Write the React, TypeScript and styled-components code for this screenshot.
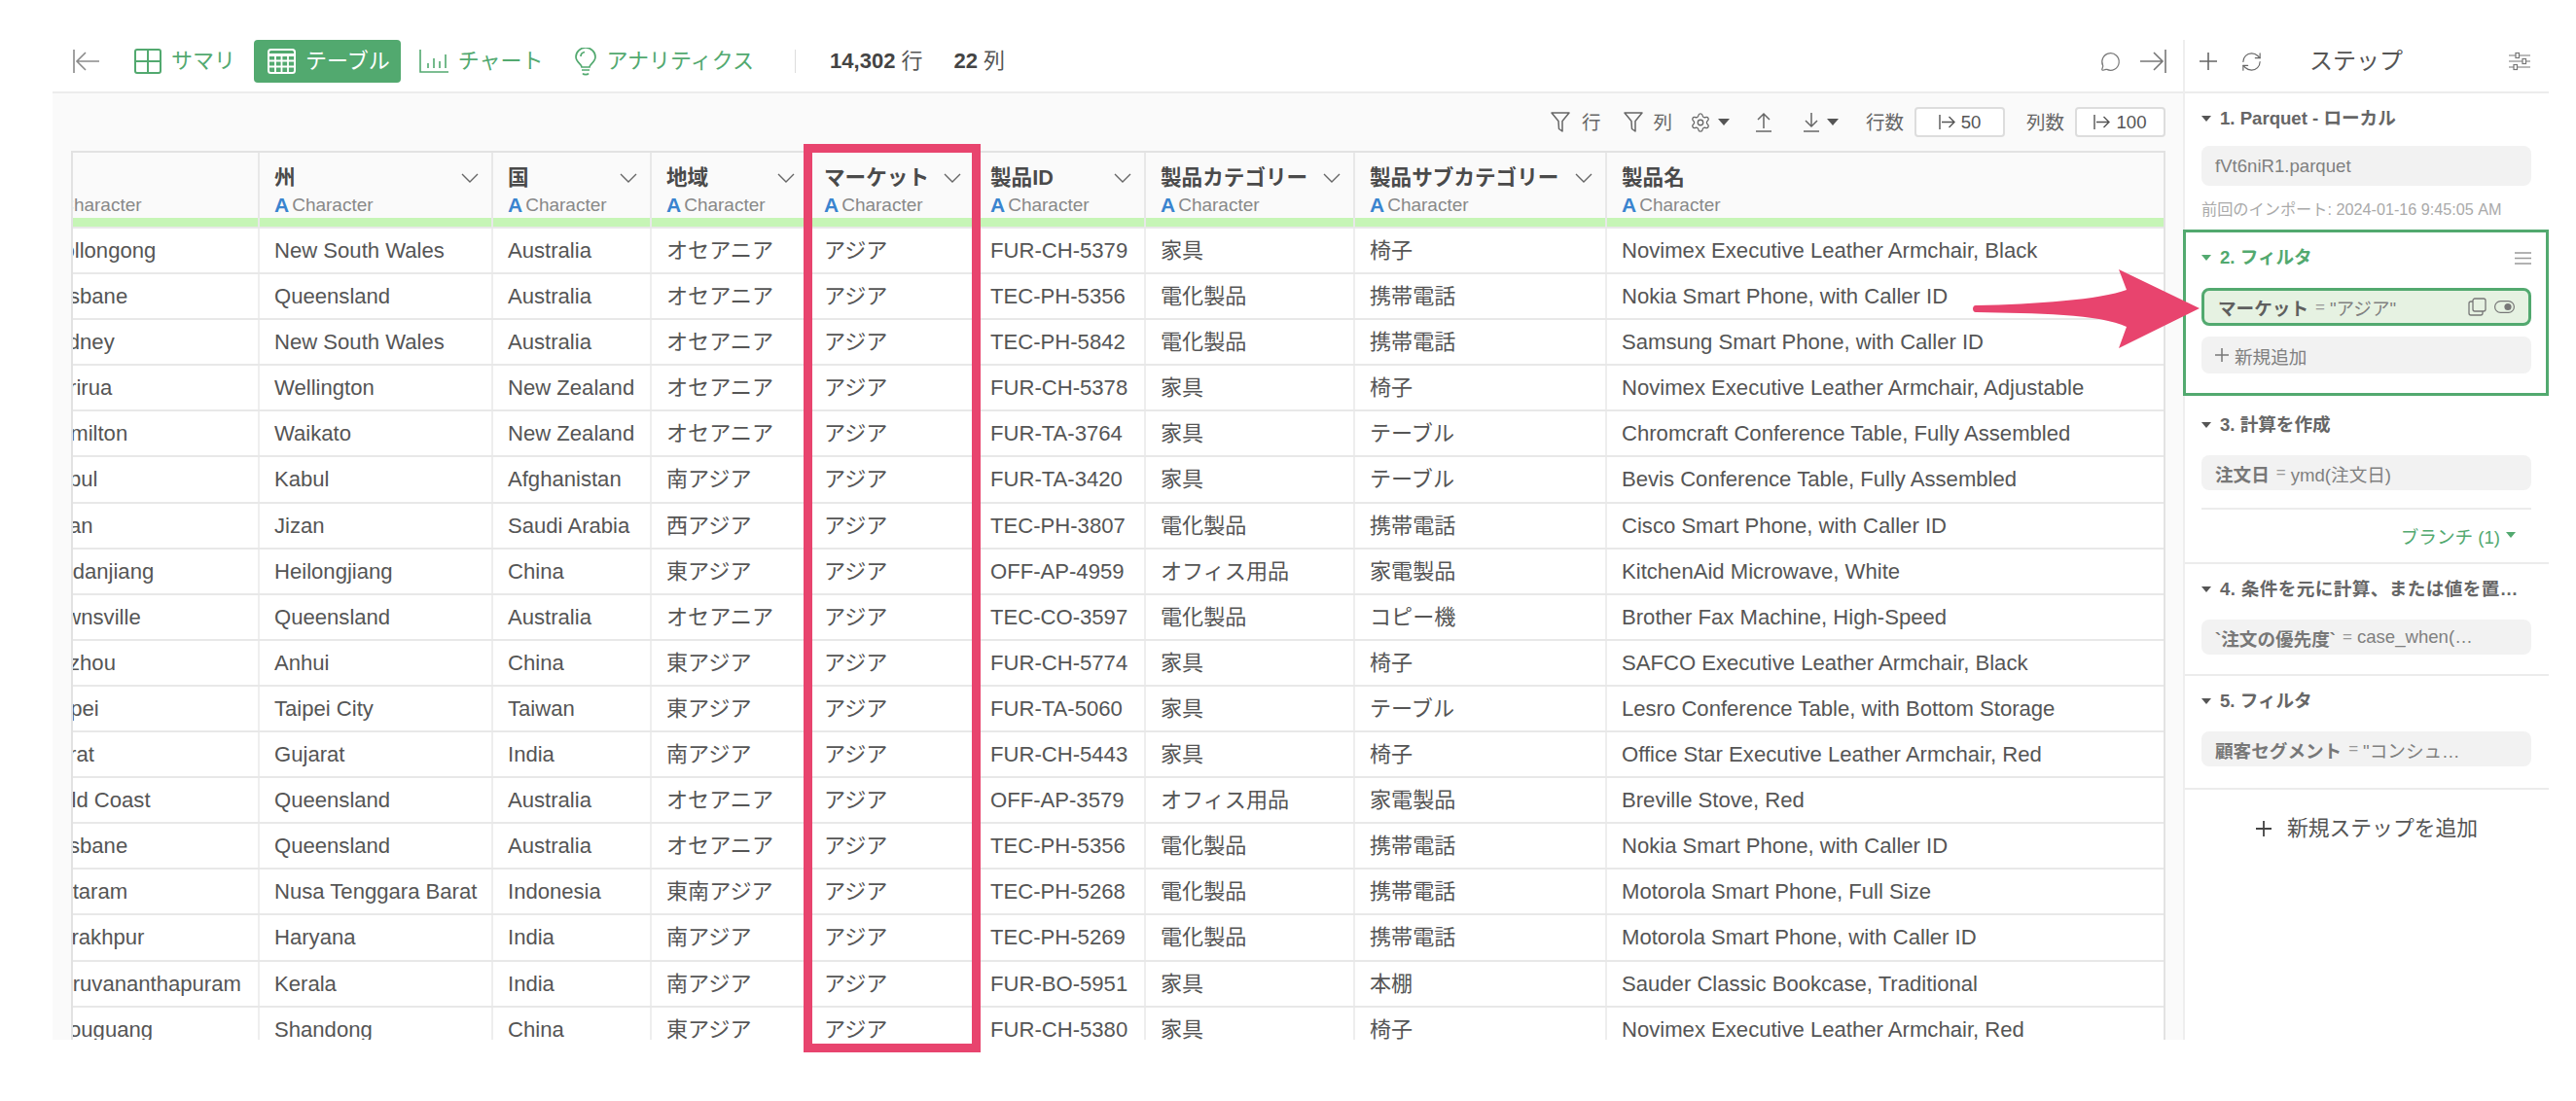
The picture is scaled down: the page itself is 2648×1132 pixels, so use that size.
import styled, { createGlobalStyle } from "styled-components";
import { MessageCircle, RefreshCw, Settings } from "lucide-react";

const SANS = `"Liberation Sans", "Noto Sans CJK JP", sans-serif`;
const GREEN = "#52a96f";
const PINK = "#e8446e";

const GlobalStyle = createGlobalStyle`
  html, body { margin: 0; padding: 0; background: #fff; }
  body { font-family: ${SANS}; color: #555; }
  * { box-sizing: border-box; }
`;

const Page = styled.div`
  position: relative;
  display: flex;
  width: 2648px;
  height: 1132px;
  padding: 41px 28px 0 54px;
  overflow: hidden;
`;

const Main = styled.div`
  display: flex;
  flex-direction: column;
  width: 2190px;
  height: 1028px;
`;

const TopBar = styled.div`
  display: flex;
  align-items: center;
  flex: 0 0 55px;
  height: 55px;
  padding: 0 17px 9px 21px;
  border-bottom: 2px solid #ececec;
`;

const Collapse = styled.svg`
  width: 27px;
  height: 24px;
  margin-right: 22px;
  color: #8a8a8a;
`;

const Tab = styled.div<{ $active?: boolean; $gap?: number }>`
  display: flex;
  align-items: center;
  height: 44px;
  margin-right: ${(p) => p.$gap ?? 6}px;
  padding: 0 11px 0 14px;
  gap: 10px;
  border-radius: 4px;
  font-size: 22px;
  line-height: 30px;
  color: ${(p) => (p.$active ? "#fff" : GREEN)};
  background: ${(p) => (p.$active ? GREEN : "transparent")};
`;

const Separator = styled.div`
  width: 1px;
  height: 24px;
  margin: 0 35px 0 31px;
  background: #ddd;
`;

const Stat = styled.div`
  margin-right: 32px;
  font-size: 22px;
  line-height: 30px;
  color: #555;
  b { color: #444; margin-right: 6px; }
`;

const TopRight = styled.div`
  display: flex;
  align-items: center;
  gap: 20px;
  margin-left: auto;
  color: #777;
`;

const ViewArea = styled.div`
  display: flex;
  flex-direction: column;
  flex: 1;
  min-height: 0;
  padding: 0 18px 0 19px;
  background: #fafafa;
`;

const SubBar = styled.div`
  display: flex;
  align-items: center;
  justify-content: flex-end;
  flex: 0 0 59px;
  font-size: 19.5px;
  line-height: 28px;
  color: #666;
`;

const ToolItem = styled.div<{ $left?: number; $gap?: number }>`
  display: flex;
  align-items: center;
  margin-left: ${(p) => p.$left ?? 0}px;
  gap: ${(p) => p.$gap ?? 0}px;
`;

const Caret = styled.span<{ $color?: string; $size?: number }>`
  display: inline-block;
  flex: none;
  width: 0;
  height: 0;
  border-left: ${(p) => p.$size ?? 6}px solid transparent;
  border-right: ${(p) => p.$size ?? 6}px solid transparent;
  border-top: ${(p) => (p.$size ?? 6) + 1}px solid ${(p) => p.$color ?? "#555"};
`;

const CountBox = styled.div`
  display: flex;
  align-items: center;
  justify-content: center;
  gap: 6px;
  width: 93px;
  height: 31px;
  border: 2px solid #ddd;
  border-radius: 4px;
  background: #fff;
  font-size: 18.6px;
  color: #555;
`;

const TableWrap = styled.div`
  flex: 1;
  min-height: 0;
  overflow: hidden;
  border: 2px solid #e2e2e2;
  border-bottom: 0;
  background: #fff;
`;

const Scroller = styled.div`
  width: calc(100% + 46px);
  margin-left: -46px;
`;

const COLUMNS = "236px 240px 163px 162px 171px 175px 215px 259px 1fr";

const HeadRow = styled.div`
  display: grid;
  grid-template-columns: ${COLUMNS};
  background: #fafafa;
`;

const HeadCell = styled.div`
  display: flex;
  flex-direction: column;
  height: 78px;
  border-left: 2px solid #e8e8e8;
  border-bottom: 2px solid #e8e8e8;
  &:first-child { border-left: 0; }
`;

const HeadBody = styled.div`
  flex: 1;
  padding: 11px 13px 0 15px;
`;

const HeadTitle = styled.div`
  display: flex;
  align-items: center;
  justify-content: space-between;
  height: 30px;
  font-size: 21.6px;
  font-weight: 700;
  line-height: 30px;
  color: #4a4a4a;
  white-space: nowrap;
  svg { flex: none; color: #666; }
`;

const HeadType = styled.div`
  display: flex;
  align-items: center;
  gap: 3px;
  height: 22px;
  margin-top: 2px;
  font-size: 19px;
  line-height: 22px;
  color: #888;
  b { font-size: 21px; color: #3a84cf; }
`;

const Strip = styled.div`
  flex: 0 0 9px;
  background: #c6f5b6;
`;

const Row = styled.div`
  display: grid;
  grid-template-columns: ${COLUMNS};
  height: 47.1px;
  border-bottom: 2px solid #e8e8e8;
`;

const Cell = styled.div`
  padding-left: 15px;
  border-left: 2px solid #eee;
  font-size: 22.1px;
  line-height: 45px;
  color: #555;
  white-space: nowrap;
  &:first-child { border-left: 0; }
`;

const Panel = styled.aside`
  display: flex;
  flex-direction: column;
  flex: 0 0 376px;
  height: 1028px;
  border-left: 2px solid #eee;
`;

const PanelHead = styled.div`
  display: flex;
  align-items: center;
  flex: 0 0 55px;
  padding: 0 19px 9px 14px;
  border-bottom: 2px solid #ececec;
  color: #666;
`;

const PanelTitle = styled.div`
  margin-left: 48px;
  font-size: 24px;
  line-height: 30px;
  color: #555;
`;

const SpinIcon = styled(RefreshCw)`
  margin-left: 23px;
`;

const PanelSettings = styled.div`
  display: flex;
  margin-left: auto;
`;

const Section = styled.section<{ $top: number; $bottom: number; $selected?: boolean; $line?: boolean }>`
  padding: ${(p) => p.$top}px 18px ${(p) => p.$bottom}px 17px;
  border-bottom: ${(p) => (p.$line ? "2px solid #ececec" : "0")};
  ${(p) =>
    p.$selected &&
    `
    margin-left: -2px;
    padding-left: 16px;
    padding-right: 15px;
    border: 3px solid ${GREEN};
  `}
`;

const StepTitle = styled.div<{ $green?: boolean; $spread?: boolean }>`
  display: flex;
  align-items: center;
  gap: 9px;
  height: 28px;
  font-size: 18.6px;
  font-weight: 700;
  line-height: 28px;
  white-space: nowrap;
  letter-spacing: ${(p) => (p.$spread ? "0.4px" : "0")};
  color: ${(p) => (p.$green ? GREEN : "#666")};
`;

const TitleMenu = styled.svg`
  width: 17px;
  height: 13px;
  margin-left: auto;
  color: #999;
`;

const Chip = styled.div<{ $top: number; $height: number; $selected?: boolean }>`
  display: flex;
  align-items: center;
  height: ${(p) => p.$height}px;
  margin-top: ${(p) => p.$top}px;
  padding: 0 14px;
  border-radius: 8px;
  font-size: 18.6px;
  color: #808080;
  white-space: nowrap;
  background: ${(p) => (p.$selected ? "#e6f2e2" : "#f2f2f2")};
  border: ${(p) => (p.$selected ? `3px solid ${GREEN}` : "0")};
  b { color: ${(p) => (p.$selected ? "#5f5f5f" : "#777")}; margin-right: 7px; }
  small { font-size: 17px; color: #999; margin-right: 5px; }
`;

const ChipIcons = styled.div`
  display: flex;
  align-items: center;
  gap: 8px;
  margin-left: auto;
  color: #777;
`;

const AddLine = styled.div`
  display: flex;
  align-items: center;
  gap: 6px;
  svg { flex: none; }
`;

const Stamp = styled.div`
  margin-top: 12px;
  font-size: 16.2px;
  line-height: 24px;
  color: #aaa;
  white-space: nowrap;
`;

const Divider = styled.div`
  height: 2px;
  margin-top: 18px;
  background: #ececec;
`;

const Branch = styled.div`
  display: flex;
  align-items: center;
  justify-content: flex-end;
  gap: 6px;
  height: 26px;
  margin-top: 13px;
  padding-right: 16px;
  font-size: 18.6px;
  color: ${GREEN};
`;

const AddStep = styled.div`
  display: flex;
  align-items: center;
  justify-content: center;
  gap: 16px;
  height: 28px;
  margin-top: 26px;
  font-size: 21.8px;
  line-height: 28px;
  color: #555;
`;

const MarketFrame = styled.div`
  position: absolute;
  left: 826px;
  top: 148px;
  width: 182px;
  height: 934px;
  border: 9px solid ${PINK};
  pointer-events: none;
`;

const ArrowMark = styled.svg`
  position: absolute;
  left: 2020px;
  top: 270px;
  width: 250px;
  height: 95px;
  pointer-events: none;
`;

const headers = [
  { title: "" },
  { title: "州" },
  { title: "国" },
  { title: "地域" },
  { title: "マーケット" },
  { title: "製品ID" },
  { title: "製品カテゴリー" },
  { title: "製品サブカテゴリー" },
  { title: "製品名", noMenu: true },
];

const rows = [
  ["Wollongong", "New South Wales", "Australia", "オセアニア", "アジア", "FUR-CH-5379", "家具", "椅子", "Novimex Executive Leather Armchair, Black"],
  ["Brisbane", "Queensland", "Australia", "オセアニア", "アジア", "TEC-PH-5356", "電化製品", "携帯電話", "Nokia Smart Phone, with Caller ID"],
  ["Sydney", "New South Wales", "Australia", "オセアニア", "アジア", "TEC-PH-5842", "電化製品", "携帯電話", "Samsung Smart Phone, with Caller ID"],
  ["Porirua", "Wellington", "New Zealand", "オセアニア", "アジア", "FUR-CH-5378", "家具", "椅子", "Novimex Executive Leather Armchair, Adjustable"],
  ["Hamilton", "Waikato", "New Zealand", "オセアニア", "アジア", "FUR-TA-3764", "家具", "テーブル", "Chromcraft Conference Table, Fully Assembled"],
  ["Kabul", "Kabul", "Afghanistan", "南アジア", "アジア", "FUR-TA-3420", "家具", "テーブル", "Bevis Conference Table, Fully Assembled"],
  ["Jizan", "Jizan", "Saudi Arabia", "西アジア", "アジア", "TEC-PH-3807", "電化製品", "携帯電話", "Cisco Smart Phone, with Caller ID"],
  ["Mudanjiang", "Heilongjiang", "China", "東アジア", "アジア", "OFF-AP-4959", "オフィス用品", "家電製品", "KitchenAid Microwave, White"],
  ["Townsville", "Queensland", "Australia", "オセアニア", "アジア", "TEC-CO-3597", "電化製品", "コピー機", "Brother Fax Machine, High-Speed"],
  ["Suzhou", "Anhui", "China", "東アジア", "アジア", "FUR-CH-5774", "家具", "椅子", "SAFCO Executive Leather Armchair, Black"],
  ["Taipei", "Taipei City", "Taiwan", "東アジア", "アジア", "FUR-TA-5060", "家具", "テーブル", "Lesro Conference Table, with Bottom Storage"],
  ["Surat", "Gujarat", "India", "南アジア", "アジア", "FUR-CH-5443", "家具", "椅子", "Office Star Executive Leather Armchair, Red"],
  ["Gold Coast", "Queensland", "Australia", "オセアニア", "アジア", "OFF-AP-3579", "オフィス用品", "家電製品", "Breville Stove, Red"],
  ["Brisbane", "Queensland", "Australia", "オセアニア", "アジア", "TEC-PH-5356", "電化製品", "携帯電話", "Nokia Smart Phone, with Caller ID"],
  ["Mataram", "Nusa Tenggara Barat", "Indonesia", "東南アジア", "アジア", "TEC-PH-5268", "電化製品", "携帯電話", "Motorola Smart Phone, Full Size"],
  ["Gorakhpur", "Haryana", "India", "南アジア", "アジア", "TEC-PH-5269", "電化製品", "携帯電話", "Motorola Smart Phone, with Caller ID"],
  ["Thiruvananthapuram", "Kerala", "India", "南アジア", "アジア", "FUR-BO-5951", "家具", "本棚", "Sauder Classic Bookcase, Traditional"],
  ["Shouguang", "Shandong", "China", "東アジア", "アジア", "FUR-CH-5380", "家具", "椅子", "Novimex Executive Leather Armchair, Red"],
];

function SummaryIcon() {
  return (
    <svg width="28" height="26" viewBox="0 0 28 26" fill="none" stroke="currentColor" strokeWidth="2">
      <rect x="1" y="1" width="26" height="24" rx="2" />
      <path d="M14 1v24M1 13h26" />
    </svg>
  );
}

function TableIcon() {
  return (
    <svg width="29" height="26" viewBox="0 0 29 26" fill="none" stroke="#fff">
      <rect x="1" y="1" width="27" height="24" rx="2.500" strokeWidth="2" />
      <path d="M1 6.500h27" strokeWidth="3" />
      <path d="M1 12.500h27M1 18.500h27M8 6.500V25M14.500 6.500V25M21 6.500V25" strokeWidth="1.800" />
    </svg>
  );
}

function ChartIcon() {
  return (
    <svg width="30" height="26" viewBox="0 0 30 26" fill="none" stroke="currentColor" strokeWidth="1.6">
      <path d="M1 1v23h29" />
      <path d="M9 15v5M15 10v10M21 13v7M27 6v14" />
    </svg>
  );
}

function BulbIcon() {
  return (
    <svg width="22" height="29" viewBox="0 0 22 29" fill="none" stroke="currentColor" strokeWidth="1.7">
      <path d="M7 20c0-3-6-5-6-10.500A10 9.500 0 0 1 21 9.500C21 15 15 17 15 20z" />
      <path d="M7 23h8M8 26.500c1 1.500 5 1.500 6 0" />
      <path d="M6 9c0-2 1.500-4 4-4.500" />
    </svg>
  );
}

function FunnelIcon() {
  return (
    <svg width="20" height="21" viewBox="0 0 20 21" fill="none" stroke="#666" strokeWidth="1.5" strokeLinejoin="round">
      <path d="M1 1h18l-7 8.500V20l-3.500-2.500-.5-8z" />
    </svg>
  );
}

function UpIcon({ down }: { down?: boolean }) {
  return (
    <svg width="16" height="21" viewBox="0 0 16 21" fill="none" stroke="#666" strokeWidth="1.5">
      {down ? <path d="M8 1v14M2 9l6 6 6-6" /> : <path d="M8 17V2M2 8l6-6 6 6" />}
      <path d="M0 20h16" />
    </svg>
  );
}

function LimitIcon() {
  return (
    <svg width="17" height="17" viewBox="0 0 17 17" fill="none" stroke="#555" strokeWidth="1.4">
      <path d="M1 1v15M3 8.500h13M10.500 3l5.500 5.500-5.500 5.500" />
    </svg>
  );
}

function Chevron() {
  return (
    <svg width="18" height="10" viewBox="0 0 18 10" fill="none" stroke="currentColor" strokeWidth="1.4">
      <path d="M1 1l8 8 8-8" />
    </svg>
  );
}

function SlidersIcon() {
  return (
    <svg width="22" height="20" viewBox="0 0 22 20" fill="none" stroke="#777" strokeWidth="1.2">
      <path d="M0 4h22M0 10h22M0 16h22" />
      <rect x="7" y="1.500" width="3.500" height="5" fill="#fff" />
      <rect x="14" y="7.500" width="3.500" height="5" fill="#fff" />
      <rect x="5" y="13.500" width="3.500" height="5" fill="#fff" />
    </svg>
  );
}

function CopyIcon() {
  return (
    <svg width="19" height="19" viewBox="0 0 19 19" fill="none" stroke="currentColor" strokeWidth="1.3">
      <rect x="5" y="1" width="13" height="13" rx="2" />
      <path d="M5 4H3a2 2 0 0 0-2 2v10a2 2 0 0 0 2 2h10a2 2 0 0 0 2-2v-2" />
    </svg>
  );
}

function ToggleIcon() {
  return (
    <svg width="21" height="13" viewBox="0 0 21 13" fill="none" stroke="currentColor" strokeWidth="1.2">
      <rect x="0.600" y="0.600" width="19.800" height="11.800" rx="5.900" />
      <circle cx="14" cy="6.500" r="3.600" fill="currentColor" stroke="none" />
    </svg>
  );
}

export default function App() {
  return (
    <Page>
      <GlobalStyle />
      <Main>
        <TopBar>
          <Collapse viewBox="0 0 27 24" fill="none" stroke="currentColor" strokeWidth="1.6">
            <path d="M1 0v24" />
            <path d="M27 12H5M13 3l-9 9 9 9" />
          </Collapse>
          <Tab $gap={8}>
            <SummaryIcon />
            サマリ
          </Tab>
          <Tab $active $gap={5}>
            <TableIcon />
            テーブル
          </Tab>
          <Tab $gap={8}>
            <ChartIcon />
            チャート
          </Tab>
          <Tab $gap={0}>
            <BulbIcon />
            アナリティクス
          </Tab>
          <Separator />
          <Stat>
            <b>14,302</b>行
          </Stat>
          <Stat>
            <b>22</b>列
          </Stat>
          <TopRight>
            <MessageCircle size={21} strokeWidth={1.4} />
            <svg width="27" height="24" viewBox="0 0 27 24" fill="none" stroke="currentColor" strokeWidth="1.6">
              <path d="M26 0v24" />
              <path d="M0 12h22M14 3l9 9-9 9" />
            </svg>
          </TopRight>
        </TopBar>
        <ViewArea>
          <SubBar>
            <ToolItem $gap={12}>
              <FunnelIcon />行
            </ToolItem>
            <ToolItem $left={24} $gap={10}>
              <FunnelIcon />列
            </ToolItem>
            <ToolItem $left={18} $gap={7}>
              <Settings size={22} strokeWidth={1.4} color="#666" />
              <Caret />
            </ToolItem>
            <ToolItem $left={27}>
              <UpIcon />
            </ToolItem>
            <ToolItem $left={33} $gap={8}>
              <UpIcon down />
              <Caret />
            </ToolItem>
            <ToolItem $left={28} $gap={11}>
              行数
              <CountBox>
                <LimitIcon />
                50
              </CountBox>
            </ToolItem>
            <ToolItem $left={22} $gap={11}>
              列数
              <CountBox>
                <LimitIcon />
                100
              </CountBox>
            </ToolItem>
          </SubBar>
          <TableWrap>
            <Scroller>
              <HeadRow>
                {headers.map((h, i) => (
                  <HeadCell key={i}>
                    <HeadBody>
                      <HeadTitle>
                        {h.title}
                        {!h.noMenu && <Chevron />}
                      </HeadTitle>
                      <HeadType>
                        <b>A</b>Character
                      </HeadType>
                    </HeadBody>
                    <Strip />
                  </HeadCell>
                ))}
              </HeadRow>
              {rows.map((row, i) => (
                <Row key={i}>
                  {row.map((value, j) => (
                    <Cell key={j}>{value}</Cell>
                  ))}
                </Row>
              ))}
            </Scroller>
          </TableWrap>
        </ViewArea>
      </Main>
      <Panel>
        <PanelHead>
          <svg width="20" height="20" viewBox="0 0 20 20" fill="none" stroke="currentColor" strokeWidth="1.6">
            <path d="M10 1v18M1 10h18" />
          </svg>
          <SpinIcon size={23} strokeWidth={1.2} />
          <PanelTitle>ステップ</PanelTitle>
          <PanelSettings>
            <SlidersIcon />
          </PanelSettings>
        </PanelHead>
        <Section $top={12} $bottom={9}>
          <StepTitle>
            <Caret $size={5.5} />
            1. Parquet - ローカル
          </StepTitle>
          <Chip $top={14} $height={41}>fVt6niR1.parquet</Chip>
          <Stamp>前回のインポート: 2024-01-16 9:45:05 AM</Stamp>
        </Section>
        <Section $top={12} $bottom={20} $selected>
          <StepTitle $green>
            <Caret $size={5.5} $color={GREEN} />
            2. フィルタ
            <TitleMenu viewBox="0 0 17 13" stroke="currentColor" strokeWidth="1.3">
              <path d="M0 1h17M0 6.500h17M0 12h17" />
            </TitleMenu>
          </StepTitle>
          <Chip $top={17} $height={39} $selected>
            <b>マーケット</b>
            <small>=</small>"アジア"
            <ChipIcons>
              <CopyIcon />
              <ToggleIcon />
            </ChipIcons>
          </Chip>
          <Chip $top={11} $height={38}>
            <AddLine>
              <svg width="14" height="14" viewBox="0 0 14 14" fill="none" stroke="#777" strokeWidth="1.5">
                <path d="M7 0v14M0 7h14" />
              </svg>
              新規追加
            </AddLine>
          </Chip>
        </Section>
        <Section $top={16} $bottom={15} $line>
          <StepTitle>
            <Caret $size={5.5} />
            3. 計算を作成
          </StepTitle>
          <Chip $top={17} $height={36}>
            <b>注文日</b>
            <small>=</small>ymd(注文日)
          </Chip>
          <Divider />
          <Branch>
            ブランチ (1)
            <Caret $size={5.5} $color={GREEN} />
          </Branch>
        </Section>
        <Section $top={12} $bottom={20} $line>
          <StepTitle $spread>
            <Caret $size={5.5} />
            4. 条件を元に計算、または値を置…
          </StepTitle>
          <Chip $top={17} $height={36}>
            <b>`注文の優先度`</b>
            <small>=</small>case_when(…
          </Chip>
        </Section>
        <Section $top={12} $bottom={22} $line>
          <StepTitle>
            <Caret $size={5.5} />
            5. フィルタ
          </StepTitle>
          <Chip $top={17} $height={36}>
            <b>顧客セグメント</b>
            <small>=</small>"コンシュ…
          </Chip>
        </Section>
        <AddStep>
          <svg width="16" height="16" viewBox="0 0 16 16" fill="none" stroke="#444" strokeWidth="1.8">
            <path d="M8 0v16M0 8h16" />
          </svg>
          新規ステップを追加
        </AddStep>
      </Panel>
      <MarketFrame />
      <ArrowMark viewBox="0 0 250 95">
        <path
          d="M11 44 C7 44 7 51 11 51 C70 52 140 53 166 66 L158 88 L241 47 L158 7 L166 28 C140 38 70 43 11 44 Z"
          fill={PINK}
        />
      </ArrowMark>
    </Page>
  );
}
